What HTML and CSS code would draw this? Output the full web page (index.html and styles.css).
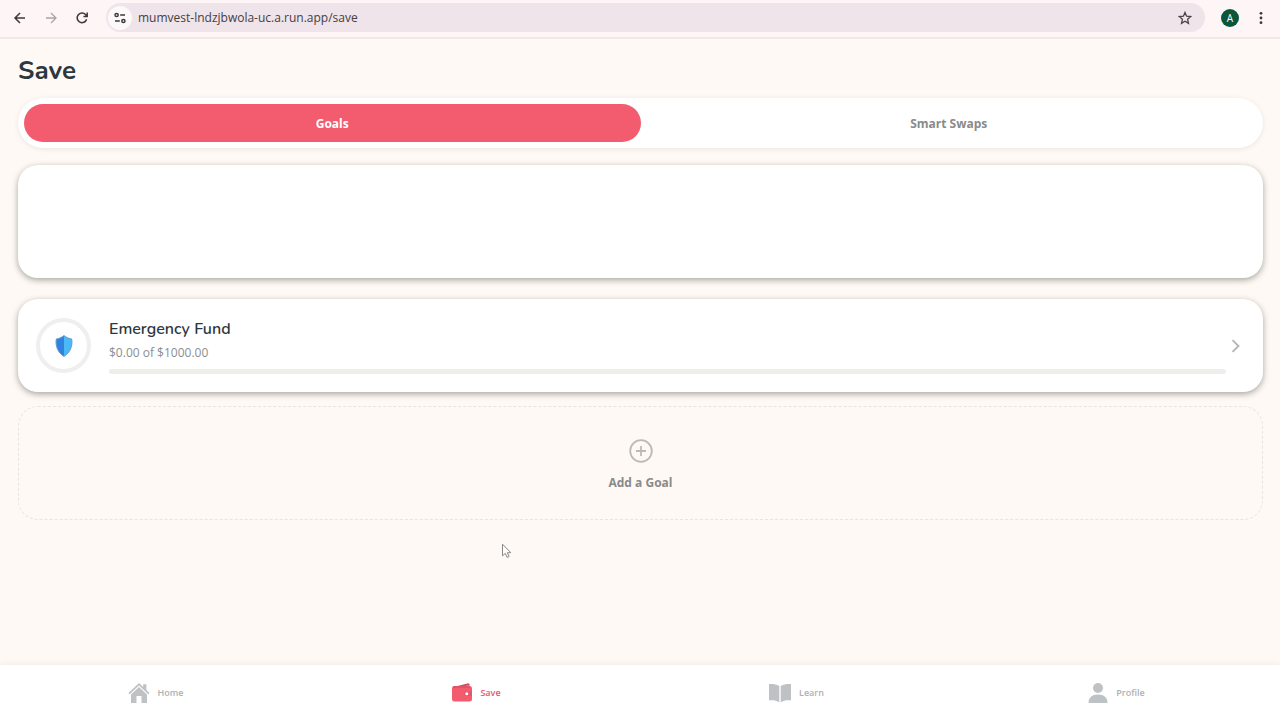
FILE: index.html
```html
<!DOCTYPE html>
<html lang="en">
<head>
<meta charset="utf-8">
<meta name="viewport" content="width=device-width, initial-scale=1">
<title>Save</title>
<link rel="stylesheet" href="styles.css">
</head>
<body class="window">
<header class="browser-bar">
  <div class="browser-nav">
    <button class="icon-button" type="button" aria-label="Back">
      <svg width="16" height="16" viewBox="0 0 16 16" fill="none" stroke="#3c383b" stroke-width="1.5"><path d="M13 8H3.2M8 3 3 8l5 5"/></svg>
    </button>
    <button class="icon-button" type="button" aria-label="Forward" disabled>
      <svg width="16" height="16" viewBox="0 0 16 16" fill="none" stroke="#a9a4a6" stroke-width="1.3"><path d="M3 8h9.8M8 3l5 5-5 5"/></svg>
    </button>
    <button class="icon-button" type="button" aria-label="Reload">
      <svg width="16" height="16" viewBox="0 0 16 16" fill="none" stroke="#3c383b" stroke-width="1.5"><path d="M12.6 9.2A4.8 4.8 0 1 1 11.5 4.6L13 6.2M13.2 2.6v3.8H9.4"/></svg>
    </button>
  </div>
  <div class="address">
    <button class="site-info" type="button" aria-label="Site information">
      <svg width="14" height="14" viewBox="0 0 14 14" fill="none" stroke="#3c383b" stroke-width="1.5"><circle cx="3.6" cy="4" r="1.6"/><path d="M7.2 4H12M2 10h4.8"/><circle cx="10.4" cy="10" r="1.6"/></svg>
    </button>
    <input class="address-input" type="text" aria-label="Address" value="mumvest-lndzjbwola-uc.a.run.app/save">
    <button class="icon-button" type="button" aria-label="Bookmark">
      <svg width="16" height="16" viewBox="0 0 16 16" fill="none" stroke="#4a4448" stroke-width="1.3"><path d="m8 2.4 1.6 3.8 4.1.4-3.1 2.7.9 4L8 11.2l-3.500 2.100.9-4-3.100-2.700 4.100-.4z"/></svg>
    </button>
  </div>
  <button class="avatar" type="button" aria-label="Account A">A</button>
  <button class="icon-button" type="button" aria-label="Menu">
    <svg width="16" height="16" viewBox="0 0 16 16" fill="#3c383b"><circle cx="8" cy="3.3" r="1.4"/><circle cx="8" cy="8" r="1.4"/><circle cx="8" cy="12.7" r="1.4"/></svg>
  </button>
</header>

<main class="page">
  <h1 class="page-title">Save</h1>
  <div class="tabs" role="tablist">
    <button class="tab tab-active" type="button" role="tab" aria-selected="true">Goals</button>
    <button class="tab" type="button" role="tab" aria-selected="false">Smart Swaps</button>
  </div>
  <section class="card card-blank" aria-label="Summary"></section>
  <a class="card goal" href="#emergency-fund">
    <span class="goal-ring">
      <svg width="18" height="22" viewBox="0 0 18 22"><path d="M9 .6C7.200 2 4.600 3.600 1.300 4 .2 11 2.800 17.600 9 21.400z" fill="#2f83dc"/><path d="M9 .6c1.800 1.400 4.400 3 7.700 3.400C17.800 11 15.200 17.600 9 21.400z" fill="#4db8f8"/><path d="M9 .6C7.200 2 4.600 3.600 1.300 4 .2 11 2.800 17.600 9 21.400c6.200-3.800 8.800-10.400 7.700-17.400C13.400 3.600 10.800 2 9 .6z" fill="none" stroke="#5c9bd5" stroke-width="1"/></svg>
    </span>
    <span class="goal-body">
      <span class="goal-name">Emergency Fund</span>
      <span class="goal-amount">$0.00 of $1000.00</span>
      <progress class="goal-progress" value="0" max="1000" aria-label="Emergency Fund progress"></progress>
    </span>
    <svg class="goal-chevron" width="12" height="16" viewBox="0 0 12 16" fill="none" stroke="#b4b4b4" stroke-width="1.8"><path d="m2.500 2.200 6 5.800-6 5.800"/></svg>
  </a>
  <button class="add-goal" type="button">
    <svg width="24" height="24" viewBox="0 0 24 24" fill="none" stroke="#bcb9b7" stroke-width="1.8"><circle cx="12" cy="12" r="10.800"/><path d="M12 7v10M7 12h10"/></svg>
    <span>Add a Goal</span>
  </button>
  <svg class="pointer" width="12" height="16" viewBox="0 0 12 16"><path d="M1.500 1.200v11.600l2.800-2.400 1.800 4 2-.9-1.800-3.800h3.500z" fill="#fff" stroke="#8b8784" stroke-width="1"/></svg>
</main>

<nav class="bottom-nav" aria-label="Main">
  <a class="nav-link" href="#home">
    <svg width="22" height="22" viewBox="0 0 22 22" fill="#bfc2c5"><path d="M11 1 .4 11l1.300 1.300L11 3.600l9.300 8.700 1.300-1.300-3.200-3V2.200h-3.200V5z"/><path d="m11 5-8 7.500V21h5.500v-7h5v7H19v-8.500z"/></svg>
    Home
  </a>
  <a class="nav-link nav-link-active" href="#save" aria-current="page">
    <svg width="22" height="22" viewBox="0 0 22 22"><path d="M1.500 5.200 16.500 1.400q2-.5 2.500 2.200z" fill="#cf4b62"/><rect x="1" y="4" width="20" height="15.500" rx="2.500" fill="#f25c6e"/><path d="M2 5h17" stroke="#d94c61" stroke-width="1.200"/><path d="M15 9.500h6v4.600h-6a2.300 2.300 0 0 1 0-4.600z" fill="#e9546a"/><circle cx="15.800" cy="11.800" r="1.500" fill="#fff"/></svg>
    Save
  </a>
  <a class="nav-link" href="#learn">
    <svg width="24" height="22" viewBox="0 0 24 22" fill="#bfc2c5"><path d="M11.300 3.900C8 2 4.500 1.700 1 2.100v16.300c3.600-.5 7.100 0 10.300 1.900zM12.700 3.900C16 2 19.500 1.700 23 2.100v16.300c-3.600-.5-7.100 0-10.300 1.900z"/></svg>
    Learn
  </a>
  <a class="nav-link" href="#profile">
    <svg width="22" height="22" viewBox="0 0 22 22" fill="#bfc2c5"><circle cx="11" cy="6" r="5"/><path d="M1.500 21c0-5.500 3.500-8.500 9.500-8.500s9.500 3 9.500 8.500z"/></svg>
    Profile
  </a>
</nav>
</body>
</html>
```
FILE: styles.css
```css
* {
  box-sizing: border-box;
}

.window {
  margin: 0;
  min-height: 100vh;
  display: flex;
  flex-direction: column;
  background: #fef9f5;
  color: #2d3740;
  font-family: "Open Sans", "Noto Sans", sans-serif;
}

button,
input {
  margin: 0;
  padding: 0;
  border: 0;
  background: none;
  color: inherit;
  font: inherit;
}

svg {
  display: block;
  flex: none;
}

.browser-bar {
  display: flex;
  align-items: center;
  gap: 16px;
  padding: 3px 11px 5px 12px;
  background: #fdf5f6;
  border-bottom: 2px solid #f2e8ea;
}

.browser-nav {
  display: flex;
  gap: 15px;
}

.icon-button {
  flex: none;
}

.address {
  flex: 1;
  display: flex;
  align-items: center;
  gap: 6px;
  height: 29px;
  padding: 0 12px 0 2px;
  border-radius: 15px;
  background: #efe4ea;
}

.site-info {
  display: grid;
  place-items: center;
  width: 24px;
  height: 24px;
  border-radius: 50%;
  background: #fdf8f9;
}

.address-input {
  flex: 1;
  min-width: 0;
  outline: 0;
  color: #454044;
  font-size: 12px;
}

.avatar {
  width: 18px;
  height: 18px;
  border-radius: 50%;
  background: #0b573d;
  color: #fff;
  font-size: 10px;
  line-height: 18px;
}

.browser-bar > .icon-button {
  margin-left: -2px;
}

.page {
  position: relative;
  flex: 1;
  padding: 14px 17px 24px 18px;
}

.page-title {
  margin: 0 0 9px;
  font-family: "Nunito", "Open Sans", sans-serif;
  font-size: 26px;
  font-weight: 700;
  line-height: 36px;
}

.tabs {
  display: flex;
  padding: 6px;
  margin-bottom: 17px;
  border-radius: 25px;
  background: #fff;
  box-shadow: 0 1px 5px rgba(70, 60, 50, 0.1);
}

.tab {
  flex: 1;
  height: 38px;
  border-radius: 19px;
  color: #888b8c;
  font-size: 12px;
  font-weight: 700;
}

.tab-active {
  background: #f25c6e;
  color: #fff;
}

.card {
  border-radius: 20px;
  background: #fff;
  box-shadow: 0 2px 6px rgba(60, 62, 50, 0.45);
}

.card-blank {
  height: 113px;
  margin-bottom: 21px;
}

.goal {
  display: flex;
  align-items: center;
  padding: 18px 21px 18px 18px;
  margin-bottom: 14px;
  color: inherit;
  text-decoration: none;
}

.goal-ring {
  display: grid;
  place-items: center;
  width: 55px;
  height: 55px;
  margin-right: 18px;
  border: 4px solid #efefed;
  border-radius: 50%;
}

.goal-body {
  flex: 1;
  display: flex;
  flex-direction: column;
}

.goal-name {
  font-family: "Nunito", "Open Sans", sans-serif;
  font-size: 16px;
  font-weight: 600;
  line-height: 25px;
}

.goal-amount {
  margin-bottom: 5px;
  color: #8b8e8f;
  font-size: 12px;
  line-height: 22px;
}

.goal-progress {
  display: block;
  width: 100%;
  height: 5px;
  border: 0;
  border-radius: 3px;
  appearance: none;
  overflow: hidden;
  background: #eeeeeb;
}

.goal-progress::-webkit-progress-bar {
  background: #eeeeeb;
}

.goal-progress::-webkit-progress-value {
  background: #f25c6e;
}

.goal-chevron {
  margin-left: 4px;
}

.add-goal {
  display: flex;
  flex-direction: column;
  align-items: center;
  justify-content: center;
  gap: 10px;
  width: 100%;
  padding: 32px 0 26px;
  border: 1px dashed #e8e4df;
  border-radius: 20px;
  color: #888b89;
  font-size: 12px;
  font-weight: 700;
  line-height: 20px;
}

.pointer {
  position: absolute;
  left: 501px;
  top: 504px;
}

.bottom-nav {
  display: grid;
  grid-template-columns: repeat(4, 1fr);
  background: #fff;
  box-shadow: 0 -1px 6px rgba(70, 60, 50, 0.07);
}

.nav-link {
  display: flex;
  align-items: center;
  justify-content: center;
  gap: 7px;
  height: 55px;
  padding-right: 8px;
  color: #aeb1b3;
  font-size: 9px;
  font-weight: 600;
  text-decoration: none;
}

.nav-link-active {
  color: #e4566b;
}
```
